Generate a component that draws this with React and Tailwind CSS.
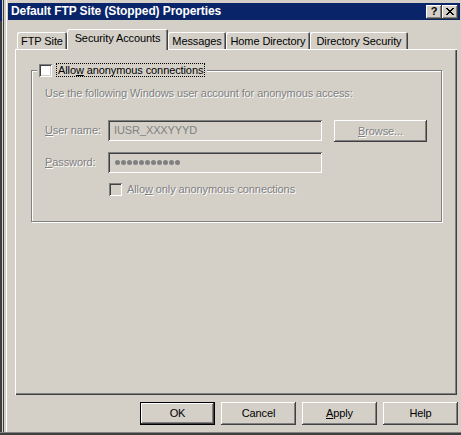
import React from "react";

const raised =
  "shadow-[inset_-1px_-1px_#404040,inset_1px_1px_#ffffff,inset_-2px_-2px_#808080,inset_2px_2px_#d4d0c8]";
const sunken =
  "shadow-[inset_1px_1px_#808080,inset_-1px_-1px_#ffffff,inset_2px_2px_#404040,inset_-2px_-2px_#d4d0c8]";
const disabled = "text-[#808080] [text-shadow:1px_1px_0_#ffffff]";

const tabs = [
  { label: "FTP Site", cls: "w-[50px]" },
  { label: "Security Accounts", cls: "w-[101px]", sel: true },
  { label: "Messages", cls: "w-[58px]" },
  { label: "Home Directory", cls: "w-[84px]" },
  { label: "Directory Security", cls: "w-[98px]" },
];

function CloseGlyph() {
  return (
    <svg width="8" height="7" viewBox="0 0 8 7" shapeRendering="crispEdges">
      <path
        fill="#000"
        d="M0 0h2v1H0zM6 0h2v1H6zM1 1h2v1H1zM5 1h2v1H5zM2 2h4v1H2zM3 3h2v1H3zM2 4h4v1H2zM1 5h2v1H1zM5 5h2v1H5zM0 6h2v1H0zM6 6h2v1H6z"
      />
    </svg>
  );
}

export default function App() {
  return (
    <div className="w-[461px] h-[435px] bg-[#d4d0c8] flex flex-col overflow-hidden font-['Liberation_Sans',Arial,sans-serif] text-[11px] leading-[13px] tracking-[-0.1px] text-black">
      <div className="flex h-[432px]">
        {/* left window frame */}
        <div className="flex w-[8px] shrink-0">
          <div className="w-[2px] flex flex-col">
            <div className="h-[21px] bg-[#0a246a]" />
            <div className="flex-1 bg-[#404040]" />
          </div>
          <div className="w-[1px] bg-[#d4d0c8]" />
          <div className="w-[1px] bg-[#404040]" />
          <div className="w-[2px]" />
          <div className="w-[1px] bg-white" />
          <div className="w-[1px]" />
        </div>

        <div className="w-[452px] shrink-0 flex flex-col pt-[3px]">
          {/* title bar */}
          <div className="h-[17px] bg-[#0a246a] flex items-center pl-[3px] pr-[2px]">
            <span className="flex-1 text-white font-bold text-[12px] tracking-[-0.1px] leading-[13px] whitespace-nowrap">
              Default FTP Site (Stopped) Properties
            </span>
            <div className="flex">
              <div
                className={`${raised} bg-[#d4d0c8] w-[16px] h-[14px] flex items-center justify-center font-bold text-[11px] leading-[11px]`}
              >
                ?
              </div>
              <div
                className={`${raised} bg-[#d4d0c8] w-[16px] h-[14px] flex items-center justify-center`}
              >
                <CloseGlyph />
              </div>
            </div>
          </div>

          {/* tabs */}
          <div className="mt-[9px] h-[20px] ml-[7px] pl-[2px] flex items-end">
            {tabs.map((t) =>
              t.sel ? (
                <div
                  key={t.label}
                  className={`${t.cls} relative z-10 -mb-px h-[21px] pt-[3px] bg-[#d4d0c8] rounded-t-[2px] text-center whitespace-nowrap shadow-[inset_1px_1px_#ffffff,inset_-1px_0_#404040,inset_-2px_0_#808080]`}
                >
                  {t.label}
                </div>
              ) : (
                <div
                  key={t.label}
                  className={`${t.cls} h-[17px] pt-[3px] bg-[#d4d0c8] rounded-t-[2px] text-center whitespace-nowrap shadow-[inset_1px_1px_#ffffff,inset_-1px_0_#404040,inset_-2px_0_#808080]`}
                >
                  {t.label}
                </div>
              )
            )}
          </div>

          {/* tab panel */}
          <div className="ml-[7px] w-[442px] h-[346px] px-[16px] pt-[21px] shadow-[inset_1px_1px_#ffffff,inset_-1px_-1px_#404040,inset_-2px_-2px_#808080]">
            <div className="relative w-[411px] h-[152px] border border-[#808080] shadow-[inset_1px_1px_#ffffff,1px_1px_#ffffff] pl-[13px] pt-[16px]">
              {/* legend */}
              <div className="absolute left-[5px] top-[-8px] h-[14px] px-[2px] bg-[#d4d0c8] flex items-start">
                <div className={`${sunken} bg-white w-[13px] h-[13px] mt-[1px]`} />
                <div className="ml-[4px] h-[14px] px-[1px] border border-dotted border-black flex items-center whitespace-nowrap">
                  <span>
                    Allo<span className="underline">w</span> anonymous connections
                  </span>
                </div>
              </div>

              <div className={`${disabled} h-[13px] whitespace-nowrap`}>
                Use the following Windows user account for anonymous access:
              </div>

              <div className="mt-[20px] flex items-start">
                <div className={`${disabled} w-[63px] pt-[4px] whitespace-nowrap`}>
                  <span className="underline">U</span>ser name:
                </div>
                <div className={`${sunken} w-[214px] h-[21px] pl-[6px] flex items-center text-[#808080]`}>
                  IUSR_XXXYYYD
                </div>
                <div
                  className={`${raised} ml-[12px] w-[93px] h-[22px] flex items-center justify-center ${disabled}`}
                >
                  <span>
                    <span className="underline">B</span>rowse...
                  </span>
                </div>
              </div>

              <div className="mt-[10px] flex items-start">
                <div className={`${disabled} w-[63px] pt-[4px] whitespace-nowrap`}>
                  <span className="underline">P</span>assword:
                </div>
                <div className={`${sunken} w-[214px] h-[21px] pl-[7px] flex items-center gap-[1px]`}>
                  {Array.from({ length: 11 }).map((_, i) => (
                    <span key={i} className="w-[5px] h-[5px] rounded-full bg-[#808080]" />
                  ))}
                </div>
              </div>

              <div className="mt-[10px] ml-[64px] flex items-center">
                <div className={`${sunken} bg-[#d4d0c8] w-[13px] h-[13px]`} />
                <div className={`${disabled} ml-[5px] whitespace-nowrap`}>
                  Allo<span className="underline">w</span> only anonymous connections
                </div>
              </div>
            </div>
          </div>

          {/* dialog buttons */}
          <div className="mt-[7px] flex justify-end gap-[6px] pr-[2px]">
            <div
              className={`w-[75px] h-[23px] border border-black ${raised} flex items-center justify-center`}
            >
              OK
            </div>
            <div className={`w-[75px] h-[23px] ${raised} flex items-center justify-center`}>
              Cancel
            </div>
            <div className={`w-[75px] h-[23px] ${raised} flex items-center justify-center`}>
              <span>
                <span className="underline">A</span>pply
              </span>
            </div>
            <div className={`w-[75px] h-[23px] ${raised} flex items-center justify-center`}>
              Help
            </div>
          </div>
        </div>
        <div className="flex-1" />
      </div>
      <div className="h-[1px] bg-[#808080]" />
      <div className="h-[2px] bg-[#404040]" />
    </div>
  );
}
